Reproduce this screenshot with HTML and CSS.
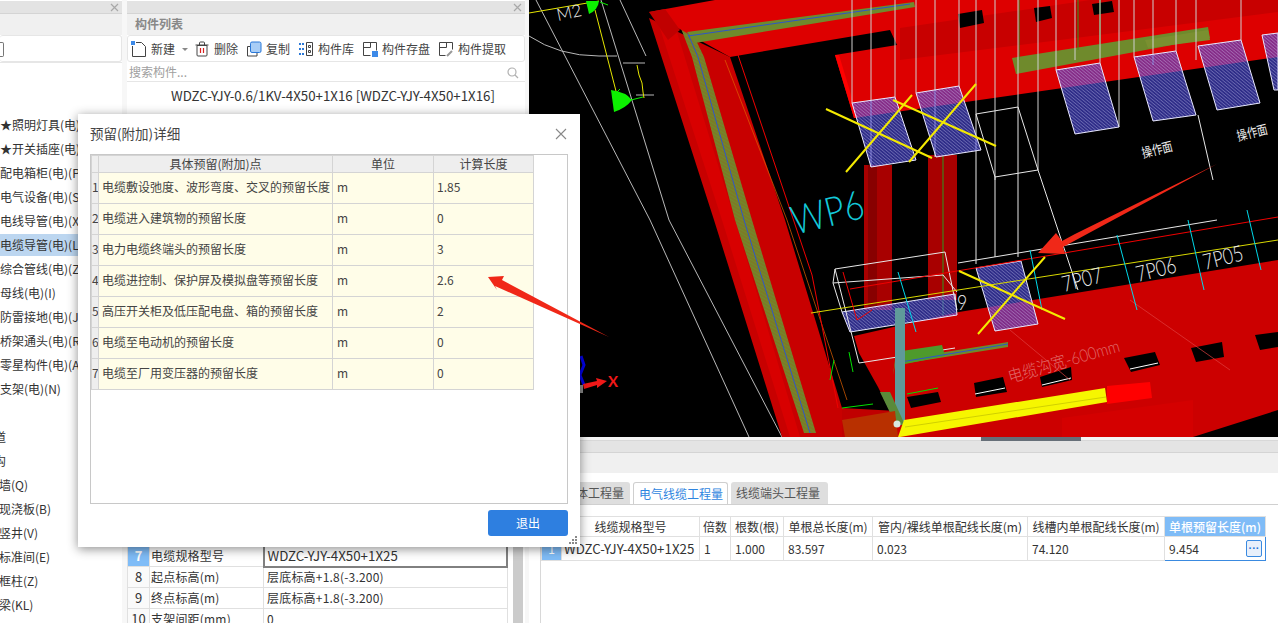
FILE: index.html
```html
<!DOCTYPE html>
<html lang="zh">
<head>
<meta charset="utf-8">
<title>预留(附加)详细</title>
<link rel="stylesheet" href="styles.css">
</head>
<body>
<div class="app">
  <aside class="left">
    <div class="band"><svg class="x" viewBox="0 0 9 9"><path d="M1 1l7 7M8 1l-7 7"/></svg></div>
    <div class="title"></div>
    <div class="tools"><span class="stub"></span></div>
    <ul class="tree">
      <li>★照明灯具(电)(L)</li>
      <li>★开关插座(电)(K)</li>
      <li>配电箱柜(电)(P)</li>
      <li>电气设备(电)(S)</li>
      <li>电线导管(电)(X)</li>
      <li class="sel">电缆导管(电)(L)</li>
      <li>综合管线(电)(Z)</li>
      <li>母线(电)(I)</li>
      <li>防雷接地(电)(J)</li>
      <li>桥架通头(电)(R)</li>
      <li>零星构件(电)(A)</li>
      <li>支架(电)(N)</li>
      <li></li>
      <li class="cut1">道</li>
      <li class="cut1">沟</li>
      <li class="cut2">墙(Q)</li>
      <li class="cut2">现浇板(B)</li>
      <li class="cut2">竖井(V)</li>
      <li class="cut2">标准间(E)</li>
      <li class="cut2">框柱(Z)</li>
      <li class="cut2">梁(KL)</li>
    </ul>
  </aside>

  <section class="mid">
    <div class="band"><svg class="x" viewBox="0 0 9 9"><path d="M1 1l7 7M8 1l-7 7"/></svg></div>
    <div class="title">构件列表</div>
    <div class="tools">
      <span class="tool"><svg viewBox="0 0 16 16"><path class="ln" d="M1.500 5v10.500h13V5.500l-4-4H5"/><path class="bl" d="M0 0h4v4H0z"/></svg>新建<i class="caret"></i></span>
      <span class="tool"><svg viewBox="0 0 16 16"><path class="ln" d="M3 4.500h10v9.500q0 1-1 1H4q-1 0-1-1zM1.500 4h13M5.500 4V2q0-1 1-1h3q1 0 1 1v2"/><path class="rd" d="M6.500 7v5M9.500 7v5"/></svg>删除</span>
      <span class="tool"><svg viewBox="0 0 16 16"><path class="ln" d="M4 5.500H1.500v9.500h9.500v-3"/><rect class="blf" x="4.500" y="1" width="10.500" height="10.500" rx="1.500"/></svg>复制</span>
      <span class="tool"><svg viewBox="0 0 16 16"><path class="ln" d="M8.500 1.500h6v13h-6zM10.500 4.500h2v2h-2zM10.500 9.500h2v2h-2z"/><path class="bls" d="M1 3h5M1 8h5M1 13h5"/></svg>构件库</span>
      <span class="tool"><svg viewBox="0 0 16 16"><path class="ln" d="M1.500 1.500h13v8M1.500 1.500v13h7M1.500 6.500h7v-5"/><path class="bl" d="M10 10h6v6h-6z"/></svg>构件存盘</span>
      <span class="tool"><svg viewBox="0 0 16 16"><path class="ln" d="M1.500 1.500h13v7M1.500 1.500v13h6M1.500 6.500h7v-5"/><path class="gr" d="M9 15l5-5"/></svg>构件提取</span>
    </div>
    <div class="search"><span>搜索构件...</span><svg viewBox="0 0 12 12"><circle cx="5" cy="5" r="4"/><path d="M8 8l3 3"/></svg></div>
    <div class="list">WDZC-YJY-0.6/1KV-4X50+1X16 [WDZC-YJY-4X50+1X16]</div>
    <div class="props">
      <table class="ptable">
        <tr><th class="hot">7</th><td>电缆规格型号</td><td class="edit">WDZC-YJY-4X50+1X25</td></tr>
        <tr><th>8</th><td>起点标高(m)</td><td>层底标高+1.8(-3.200)</td></tr>
        <tr><th>9</th><td>终点标高(m)</td><td>层底标高+1.8(-3.200)</td></tr>
        <tr><th>10</th><td>支架间距(mm)</td><td>0</td></tr>
      </table>
      <div class="pscroll"></div>
    </div>
  </section>

  <main class="right">
    <svg class="cad" viewBox="529 0 749 437" role="img" aria-label="三维电缆模型视图">
      <defs>
        <pattern id="hatch" width="2.500" height="2.500" patternUnits="userSpaceOnUse" patternTransform="rotate(40)">
          <rect width="2.500" height="2.500" fill="#4a46e0" fill-opacity=".6"/>
          <path d="M0 .5h2.500" stroke="#dcdcff" stroke-opacity=".4" stroke-width=".8"/>
        </pattern>
        <pattern id="olive" width="3" height="3" patternUnits="userSpaceOnUse" patternTransform="rotate(30)">
          <rect width="3" height="3" fill="#6f8a2c"/>
          <path d="M0 1h3" stroke="#8a6a20" stroke-width="1"/>
        </pattern>
      </defs>
      <rect x="529" width="749" height="437" fill="#000"/>

      <!-- left floor lines -->
      <g fill="none" stroke="#b8b8b8" stroke-width="1">
        <path d="M536 0l114 220 99 217M601 0l68 220 113 217M529 36q30 20 70 20h18M620 0l26 56"/>
        <path d="M623 63h22M636 95h18"/>
      </g>
      <path d="M529 13l70-12" stroke="#e6e600" fill="none"/>
      <path d="M595 10l22 85M637 65l2 10 3 8 1 9 1 6" stroke="#e6e600" fill="none"/>
      <text x="0" y="0" transform="translate(558 21) rotate(-12)" class="cad-w">M2</text>
      <path d="M586 1h13q-1 9-10 13z" fill="#0cf000"/>
      <path d="M611 90q15 2 21 10-6 8-18 12z" fill="#0cf000"/>
      <path d="M600 2l8 3M631 100l12-3M617 92l3-3" stroke="#0cf000" fill="none"/>

      <!-- L shaped outer beam -->
      <polygon points="649,18 714,220 782,437 900,437 842,408 785,220 730,57" fill="#c80000"/>
      <polygon points="656,16 722,220 790,437 800,437 735,220 672,16" fill="#d80000"/>
      <polygon points="675,13 683,13 704,57 752,220 816,433 804,433 735,220 692,57" fill="url(#olive)"/>
      <path d="M679 13l19 44 46 163 66 213" stroke="#2f55c8" fill="none"/>
      <path d="M725 60l62 160 60 180" stroke="#e06000" stroke-opacity=".7" fill="none"/>
      <path d="M738 55l74 220 26 133" stroke="#f00000" fill="none"/>

      <!-- top beam -->
      <polygon points="649,12 715,0 1278,0 1278,57 854,118 835,55 897,45 890,30 730,57" fill="#dd0000"/>
      <polygon points="649,12 665,9 680,30 668,40" fill="#c00000"/>
      <polygon points="900,28 1090,0 1278,0 1278,12 1060,40 900,60" fill="#c80000"/>
      <polygon points="687,32 914,2 915,7 695,43" fill="#6f8a2c"/>
      <path d="M688 36l222-32" stroke="#2f55c8" fill="none"/>
      <polygon points="835,55 839,55 858,118 854,118" fill="#ff0000"/>
      <polygon points="958,14 982,10 984,23 960,28" fill="#000"/>
      <polygon points="1034,8 1050,6 1052,18 1036,22" fill="#000"/>
      <polygon points="1092,4 1112,1 1114,12 1094,15" fill="#000"/>
      <polygon points="1012,58 1208,27 1210,38 1016,74" fill="#6f8a2c"/>
      <polygon points="1145,40 1208,30 1210,40 1148,48" fill="#7a9030"/>
      <path d="M1019 60V0M1078 50V0M1100 45V0" stroke="#2e9a1e" fill="none"/>

      <!-- dark red columns -->
      <rect x="864" y="165" width="28" height="145" fill="#a80000"/>
      <rect x="928" y="155" width="29" height="145" fill="#a80000"/>
      <rect x="868" y="165" width="9" height="145" fill="#880000"/>
      <path d="M943 155v230" stroke="#2c9a1e" fill="none"/>

      <!-- lower beam -->
      <polygon points="1278,260 959,312 854,336 859,353 878,387 897,425 860,437 1193,437 1278,410" fill="#cc0000"/>
      <polygon points="842,408 897,411 897,437 842,437" fill="#c00000"/>
      <g fill="#000">
        <polygon points="907,397 938,392 941,402 911,408"/>
        <polygon points="974,383 1003,377 1007,392 976,397"/>
        <polygon points="1040,377 1071,367 1072,380 1042,387"/>
        <polygon points="1124,358 1155,352 1160,365 1131,372"/>
        <polygon points="1191,348 1222,342 1224,357 1196,362"/>
        <polygon points="1255,335 1278,332 1278,347 1260,350"/>
      </g>
      <g stroke="#fff" fill="none">
        <path d="M975 394l30-6M1042 385l29-7M1130 369l28-6"/>
      </g>
      <path d="M842 408l31-4M907 394l31-6" stroke="#00e000" fill="none"/>
      <path d="M1010 330l60 50M1130 300l100 70" stroke="#e04040" stroke-opacity=".7" fill="none"/>

      <!-- upper white verticals and box -->
      <path d="M852 0v103M871 0v167M895 0v97M916 0v93M935 0v157M959 0v86M976 0v114M995 0v180M1018 0v107M1038 0v170M1056 0v70M1075 0v60M1100 0v63M1119 0v127M1134 0v57M1153 0v65M1176 0v51M1196 0v60M1241 0v40" stroke="#cfcfcf" fill="none"/>
      <path d="M976 114l42-7 20 63-43 7zM976 114v150M995 177v80M1018 107v150M1038 170l40 120" stroke="#e8e8e8" fill="none"/>
      <path d="M1198 115l15 65" stroke="#e8e8e8" fill="none"/>

      <!-- hatched panels -->
      <g fill="url(#hatch)" stroke="#e8e8ff" stroke-width="1">
        <polygon points="852,103 895,97 916,160 871,167"/>
        <polygon points="916,93 959,86 981,150 936,157"/>
        <polygon points="1056,70 1100,63 1119,127 1075,134"/>
        <polygon points="1134,57 1176,51 1196,115 1153,121"/>
        <polygon points="1198,46 1241,40 1260,103 1217,110"/>
        <polygon points="1262,35 1278,33 1278,90 1274,90"/>
        <polygon points="976,268 1021,261 1038,324 995,331"/>
        <polygon points="842,312 955,294 957,315 850,332"/>
      </g>

      <!-- wire boxes -->
      <g fill="none" stroke="#e8e8e8">
        <path d="M835 269l110-17 12 58M835 269l-2 14 9 29M833 283l110-8 14 17M835 269l24 94M859 363l96-15"/>
        <path d="M958 263l259-43"/>
      </g>
      <path d="M811 313l467-73" stroke="#d8d800" fill="none"/>
      <path d="M850 289l428-72" stroke="#f00000" fill="none"/>
      <path d="M843 272l14 48 15-10" stroke="#f00000" fill="none"/>
      <g stroke="#00d8e8" fill="none">
        <path d="M1117 235l20 75M1188 220l16 70M1247 210l14 60M898 272l18 60M1030 250l12 60"/>
      </g>

      <!-- teal pipe, beam, yellow bar -->
      <polygon points="895,360 1008,342 1008,347 895,365 893,375" fill="#6f8a2c"/>
      <polygon points="895,352 942,345 945,356 895,366" fill="#4e9a2c"/>
      <path d="M895 363l113-19" stroke="#2f55c8" fill="none"/>
      <rect x="895" y="308" width="10" height="115" fill="#5f9a9a"/>
      <polygon points="880,392 890,392 905,425 896,425" fill="#5a8a3a"/>
      <polygon points="1062,418 1193,400 1193,437 1062,437" fill="#d40000"/>
      <polygon points="904,420 1105,388 1107,402 900,437 898,437" fill="#f6f600"/>
      <path d="M905 427l201-30" stroke="#d0d000" fill="none"/>
      <polygon points="1107,386 1150,382 1152,398 1107,404" fill="#ff0000"/>
      <polygon points="842,420 895,411 898,437 845,437" fill="#b83000"/>
      <circle cx="897" cy="424" r="3.500" fill="#d8e8e0"/>

      <!-- crosses -->
      <g stroke="#f4ea00" stroke-width="2" fill="none">
        <path d="M826 109l106 49M912 95l-66 77M893 100l103 46M976 84l-67 78M959 271l106 48M1045 257l-67 77"/>
      </g>

      <!-- texts -->
      <text class="cad-cy" transform="translate(795 235) rotate(-14) scale(.85 1)">WP6</text>
      <text class="cad-nm" transform="translate(1064 292) rotate(-14) scale(.8 1)">7P07</text>
      <text class="cad-nm" transform="translate(1138 282) rotate(-14) scale(.8 1)">7P06</text>
      <text class="cad-nm" transform="translate(1205 270) rotate(-14) scale(.8 1)">7P05</text>
      <text class="cad-nm" transform="translate(957 310) scale(.8 1)">9</text>
      <text class="cad-op" transform="translate(1143 158) rotate(-14) scale(.95 1.2)">操作面</text>
      <text class="cad-op" transform="translate(1238 141) rotate(-14) scale(.95 1.2)">操作面</text>
      <text class="cad-cb" transform="translate(1010 383) rotate(-16) scale(.88 1)">电缆沟宽-600mm</text>
      <path d="M834 360l-4 20M849 352l4 20" stroke="#00e000" fill="none"/>

      <!-- arrow on model -->
      <polygon points="1217,164 1075,234 1062,241 1056,233 1038,253 1065,254 1063,247" fill="#f02818"/>

      <!-- axis -->
      <path d="M581 356l3 9-4 10 4 10" stroke="#0000e8" stroke-width="3" fill="none"/>
      <rect x="580" y="385" width="3" height="8" fill="#888"/>
      <polygon points="583,384 597,381 596,378 607,381 597,388 597,385 584,389" fill="#f01818"/>
      <text x="608" y="387" class="cad-x">X</text>
    </svg>
    <div class="split"><span class="handle"></span></div>
    <div class="rband"></div>
    <div class="rbar"></div>
    <div class="tabs">
      <span class="tab off first">本体工程量</span>
      <span class="tab on">电气线缆工程量</span>
      <span class="tab off">线缆端头工程量</span>
    </div>
    <div class="qty">
      <table class="qtable">
        <tr class="qhead">
          <th class="c0"></th><th class="c1">线缆规格型号</th><th class="c2">倍数</th><th class="c3">根数(根)</th><th class="c4">单根总长度(m)</th><th class="c5">管内/裸线单根配线长度(m)</th><th class="c6">线槽内单根配线长度(m)</th><th class="c7 active">单根预留长度(m)</th>
        </tr>
        <tr>
          <th class="rowno">1</th><td class="spec">WDZC-YJY-4X50+1X25</td><td>1</td><td>1.000</td><td>83.597</td><td>0.023</td><td>74.120</td><td class="cur">9.454<span class="more">···</span></td>
        </tr>
      </table>
    </div>
  </main>

  <div class="dialog">
    <div class="dhead"><span>预留(附加)详细</span><svg class="dclose" viewBox="0 0 12 12"><path d="M1 1l10 10M11 1L1 11"/></svg></div>
    <div class="dbody">
      <table class="dtable">
        <tr><th class="n"></th><th class="a">具体预留(附加)点</th><th class="b">单位</th><th class="c">计算长度</th></tr>
        <tr><th>1</th><td>电缆敷设弛度、波形弯度、交叉的预留长度</td><td>m</td><td>1.85</td></tr>
        <tr><th>2</th><td>电缆进入建筑物的预留长度</td><td>m</td><td>0</td></tr>
        <tr><th>3</th><td>电力电缆终端头的预留长度</td><td>m</td><td>3</td></tr>
        <tr><th>4</th><td>电缆进控制、保护屏及模拟盘等预留长度</td><td>m</td><td>2.6</td></tr>
        <tr><th>5</th><td>高压开关柜及低压配电盘、箱的预留长度</td><td>m</td><td>2</td></tr>
        <tr><th>6</th><td>电缆至电动机的预留长度</td><td>m</td><td>0</td></tr>
        <tr><th>7</th><td>电缆至厂用变压器的预留长度</td><td>m</td><td>0</td></tr>
      </table>
    </div>
    <div class="dfoot"><span class="exit">退出</span></div>
    <svg class="grip" viewBox="0 0 9 9"><path d="M6 0h2v2H6zM3 3h2v2H3zM6 3h2v2H6zM0 6h2v2H0zM3 6h2v2H3zM6 6h2v2H6z"/></svg>
  </div>

  <svg class="callout" viewBox="0 0 130 70"><polygon points="8,7 24,6 22,10 129,67 15,16 17,20"/></svg>
</div>
</body>
</html>
```

FILE: styles.css
```css
* { box-sizing: border-box; }
html, body { margin: 0; padding: 0; background: #fff; }
body { font: 12px/1.2 "Noto Sans CJK SC", "Noto Sans", sans-serif; color: #333; }
ul { list-style: none; margin: 0; padding: 0; }
table { border-collapse: collapse; table-layout: fixed; }
th, td { font-weight: 400; padding: 0; white-space: nowrap; overflow: hidden; }

.app { position: relative; display: flex; width: 1278px; height: 623px; overflow: hidden; background: #f7f7f7; }

.left { flex: 0 0 122px; margin-right: 5px; height: 623px; overflow: hidden; background: #fff; display: flex; flex-direction: column; }
.mid { flex: 0 0 398px; margin-right: 4px; height: 623px; overflow: hidden; background: #fff; display: flex; flex-direction: column; }
.right { flex: 1; height: 623px; overflow: hidden; background: #fff; display: flex; flex-direction: column; }

.band { height: 13px; margin-top: 1px; background: #e3e3e3; border-bottom: 1px solid #d4d4d4; display: flex; justify-content: flex-end; align-items: center; padding-right: 3px; flex: none; }
.x { width: 9px; height: 9px; fill: none; stroke: #a8a8a8; stroke-width: 1.200; }
.title { height: 21px; background: #f0f0f0; font-weight: 700; color: #888; line-height: 19px; padding-left: 8px; flex: none; }
.tools { height: 27px; background: #fff; border: 1px solid #e6e6e6; border-radius: 3px; display: flex; align-items: center; padding: 1px 0 0 3px; gap: 8px; flex: none; color: #444; }
.left .tools { border-left: 0; }
.stub { width: 4px; height: 15px; margin-left: -3px; border: 1px solid #777; border-left: 0; border-radius: 0 2px 2px 0; }

.tree { flex: 1; padding-top: 51px; border-top: 1px solid #e6e6e6; }
.tree li { height: 22px; margin-bottom: 2px; line-height: 22px; white-space: nowrap; font-size: 12px; }
.tree .sel { background: #bcd6f0; }
.tree .cut1 { margin-left: -6px; }
.tree .cut2 { margin-left: -1px; }

.tool { display: flex; align-items: center; gap: 4px; white-space: nowrap; }
.tool svg { width: 16px; height: 16px; flex: none; }
.tool .ln { fill: none; stroke: #444; stroke-width: 1; }
.tool .bl { fill: #3d8ae8; }
.tool .blf { fill: #a8cdf6; stroke: #2a78d8; stroke-width: 1; }
.tool .bls { stroke: #2a78d8; stroke-width: 2; stroke-dasharray: 2 1; fill: none; }
.tool .rd { stroke: #d82020; stroke-width: 1.200; fill: none; }
.tool .gr { stroke: #999; stroke-width: 2; fill: none; }
.caret { width: 0; height: 0; margin-left: 3px; margin-right: -2px; border: 3px solid transparent; border-top: 3px solid #888; border-bottom: 0; }

.search { height: 20px; flex: none; display: flex; align-items: center; justify-content: space-between; padding: 2px 6px 0 2px; color: #a0a0a0; border-bottom: 1px solid #e6e6e6; }
.search svg { width: 12px; height: 12px; fill: none; stroke: #b0b0b0; stroke-width: 1.200; }

.list { height: 463px; flex: none; padding: 6px 0 0 44px; font-size: 13.300px; color: #333; line-height: 16px; white-space: nowrap; }

.props { display: flex; flex: 1; padding-right: 2px; gap: 5px; }
.ptable { width: 381px; height: 84px; flex: none; color: #333; }
.ptable tr { height: 21px; }
.ptable th { width: 22px; border: 1px solid #e0e0e0; text-align: center; background: #fafafa; font-size: 13px; }
.ptable td { border: 1px solid #e0e0e0; padding-left: 3px; letter-spacing: .2px; }
.ptable td:nth-child(2) { width: 114px; padding-left: 1px; }
.ptable .hot { background: #7fbcf7; color: #fff; font-weight: 700; }
.ptable .edit { border: 2px solid #808080; border-top: 0; font-size: 13.300px; letter-spacing: 0; }
.pscroll { width: 10px; flex: none; background: #cbcbcb; }

.cad { display: block; width: 749px; height: 437px; flex: none; }
.cad text { font-family: "Lato", "Noto Sans", "Noto Sans CJK SC", sans-serif; }
.cad-w { font-size: 17px; fill: #eee; font-weight: 300; }
.cad-cy { font-size: 40px; fill: #14c8d8; font-weight: 300; }
.cad-nm { font-size: 22px; fill: #eee; font-weight: 300; }
.cad-op { font-size: 11px; fill: #eee; font-weight: 400; }
.cad-cb { font-size: 17px; fill: #e06a6a; font-weight: 300; }
.cad-x { font-size: 15px; font-weight: 700; fill: #f01818; }

.split { height: 4px; flex: none; background: #f4f4f4; border-bottom: 1px solid #d8d8d8; }
.handle { display: block; width: 100px; height: 4px; margin-left: 452px; background: #666f78; }
.rband { height: 12px; flex: none; background: #e4e4e4; border-bottom: 1px solid #d4d4d4; }
.rbar { height: 20px; flex: none; background: #f0f0f0; }
.tabs { height: 32px; flex: none; padding: 10px 0 0 25px; display: flex; gap: 3px; border-bottom: 1px solid #d0d0d0; align-items: flex-end; }
.tab { height: 22px; line-height: 22px; padding: 0 5px; white-space: nowrap; border-radius: 3px 3px 0 0; }
.tab.off { background: #dedede; color: #555; }
.tab.first { padding: 0 6px 0 5px; width: 76px; text-align: right; }
.tab.on { width: 95px; background: #fff; color: #2f85e0; border: 1px solid #cfcfcf; border-bottom: 0; padding: 0 5px; }
.tab.off:last-child { width: 97px; }

.qty { flex: 1; margin: 11px 0 0 11px; border-left: 1px solid #d8d8d8; }
.qtable { width: 725px; }
.qtable th, .qtable td { border: 1px solid #e0e0e0; padding-top: 1px; }
.qhead { height: 20px; }
.qhead th { text-align: center; color: #333; }
.qtable tr:last-child { height: 24px; }
.qtable td { padding-left: 4px; }
.qtable .spec { padding-left: 2px; font-size: 13.300px; }
.c0 { width: 20px; }
.c1 { width: 138px; }
.c2 { width: 31px; }
.c3 { width: 53px; }
.c4 { width: 89px; }
.c5 { width: 155px; }
.c6 { width: 137px; }
.c7 { width: 101px; }
.qtable .active { background: #7fbcf7; color: #fff; font-weight: 500; }
.qtable .rowno { background: #7fbcf7; color: #fff; text-align: center; }
.qtable .cur { position: relative; border: 1px solid #3a8ae0; }
.more { position: absolute; right: 3px; top: 3px; width: 16px; height: 17px; border: 1px solid #3a8ae0; border-radius: 2px; background: #e8f0fb; color: #2a78d8; font: 700 11px/14px "Liberation Sans", sans-serif; text-align: center; }

.dialog { position: absolute; left: 78px; top: 114px; width: 502px; height: 433px; background: #fff; box-shadow: 0 2px 10px rgba(0, 0, 0, .45); display: flex; flex-direction: column; padding: 0 12px; }
.dhead { height: 40px; flex: none; display: flex; align-items: center; justify-content: space-between; font-size: 13.500px; color: #444; padding: 0 1px 2px 0; }
.dclose { width: 12px; height: 12px; fill: none; stroke: #888; stroke-width: 1.100; margin-top: 2px; }
.dbody { height: 350px; flex: none; border: 1px solid #c8c8c8; }
.dtable { width: 442px; color: #444; }
.dtable tr { height: 31px; }
.dtable tr:first-child { height: 17px; }
.dtable th, .dtable td { border: 1px solid #d4d4d4; }
.dtable tr + tr th, .dtable tr + tr td { padding-bottom: 2px; }
.dtable th { background: #eee; text-align: center; }
.dtable td { background: #fffde8; padding-left: 3px; }
.dtable td + td { padding-left: 4px; }
.dtable td + td + td { padding-left: 3px; }
.dtable .n { width: 7px; }
.dtable .a { width: 234px; }
.dtable .b { width: 101px; }
.dtable .c { width: 100px; }
.dfoot { flex: 1; display: flex; justify-content: flex-end; align-items: flex-start; padding-top: 6px; }
.exit { width: 80px; height: 26px; line-height: 26px; text-align: center; color: #fff; background: #2e7fe0; border-radius: 3px; }
.grip { position: absolute; right: 2px; bottom: 2px; width: 9px; height: 9px; fill: #8a8a8a; }

.callout { position: absolute; left: 480px; top: 270px; width: 130px; height: 70px; fill: #f02818; }
```
